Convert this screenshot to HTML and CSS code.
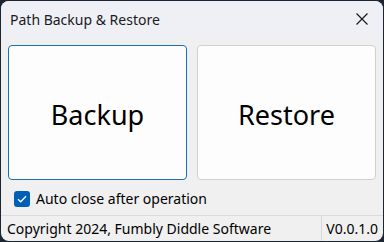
FILE: index.html
```html
<!DOCTYPE html>
<html>
<head>
<meta charset="utf-8">
<link rel="stylesheet" href="styles.css">
</head>
<body>
<div class="window">
  <div class="titlebar">
    <span class="title">Path Backup &amp; Restore</span>
    <svg class="close" width="12" height="12" viewBox="0 0 12 12"><path d="M0.5 0.5 L11.5 11.5 M11.5 0.5 L0.5 11.5" stroke="#1a1a1a" stroke-width="1.2" fill="none"/></svg>
  </div>
  <div class="content">
    <div class="buttons">
      <button class="btn default">Backup</button>
      <button class="btn">Restore</button>
    </div>
    <label class="check">
      <span class="box"><svg width="10" height="8" viewBox="0 0 10 8"><path d="M1 4.2 L3.7 6.8 L9 1.2" stroke="#fff" stroke-width="1.3" fill="none"/></svg></span>
      <span class="label">Auto close after operation</span>
    </label>
  </div>
  <div class="status">
    <span class="copy">Copyright 2024, Fumbly Diddle Software</span>
    <span class="ver">V0.0.1.0</span>
  </div>
</div>
</body>
</html>
```
FILE: styles.css
```css
html, body {
  margin: 0;
  padding: 0;
  background: #1c2633;
  width: 384px;
  height: 242px;
  overflow: hidden;
}
.window {
  margin: 1px;
  width: 382px;
  height: 240px;
  border-radius: 8px;
  overflow: hidden;
  background: #f0f0f0;
  display: flex;
  flex-direction: column;
  font-family: "Noto Sans", sans-serif;
  color: #000;
}
.titlebar {
  height: 36px;
  background: #eef0f6;
  display: flex;
  align-items: center;
  justify-content: space-between;
  padding: 0 15px 0 9px;
}
.title {
  font-size: 14px;
  color: #1a1a1a;
}
.close { display: block; }
.content {
  flex: 1;
  display: flex;
  flex-direction: column;
  padding: 8px 7px 0 7px;
}
.buttons {
  display: flex;
  gap: 10px;
}
.btn {
  flex: 1;
  height: 135px;
  background: #fdfdfd;
  border: 1px solid #d0d0d0;
  border-radius: 4px;
  font-family: "Noto Sans", sans-serif;
  font-size: 27px;
  color: #000;
  padding: 4px 0 0 0;
}
.btn.default {
  border-color: #1a6fb5;
}
.check {
  display: flex;
  align-items: center;
  gap: 6px;
  margin: 9px 0 0 6px;
}
.box {
  width: 16px;
  height: 16px;
  border-radius: 3px;
  background: #005fb8;
  display: flex;
  align-items: center;
  justify-content: center;
}
.label {
  font-size: 14px;
}
.status {
  height: 25px;
  border-top: 1px solid #dcdcdc;
  display: flex;
  align-items: center;
  font-size: 14px;
}
.copy {
  flex: 1;
  padding-left: 6px;
}
.ver {
  border-left: 1px solid #d8d8d8;
  height: 100%;
  display: flex;
  align-items: center;
  padding: 0 5px 0 4px;
}
```
